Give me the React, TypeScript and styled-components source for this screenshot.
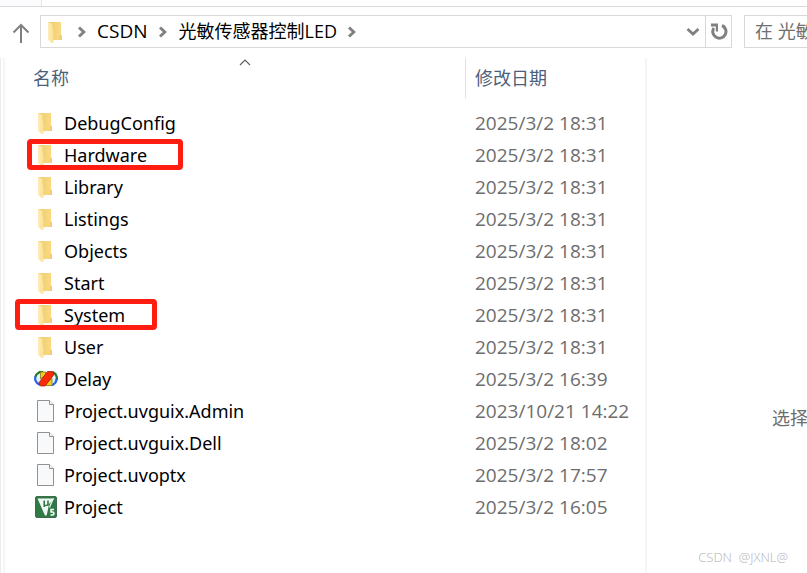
import React from "react";
import styled, { createGlobalStyle } from "styled-components";

const GlobalStyle = createGlobalStyle`
  *, *::before, *::after { box-sizing: border-box; }
  body {
    margin: 0;
    background: #fff;
    color: #000;
    font-family: "Open Sans", "Noto Sans CJK SC", sans-serif;
    font-size: 19px;
    line-height: 32px;
    overflow: hidden;
  }
  button, input { font: inherit; }
`;

const Window = styled.div`
  display: flex;
  flex-direction: column;
  min-height: 100vh;
`;

const RibbonEdge = styled.div`
  height: 7px;
  padding-left: 41px;
  background: #fcfcff;
  border-bottom: 1px solid #dadada;
`;

const RibbonPanel = styled.div`
  height: 6px;
  background: #fff;
  border-left: 1px solid #e4e4e8;
`;

const NavBar = styled.nav`
  display: flex;
  align-items: center;
  padding: 8px 0 10px;
`;

const IconButton = styled.button`
  display: flex;
  align-items: center;
  justify-content: center;
  flex: none;
  height: 31px;
  padding: 0;
  border: 0;
  background: none;
  color: #808080;
`;

const UpButton = styled(IconButton)`
  width: 40px;
  padding: 2px 0 0 2px;
`;

const DropButton = styled(IconButton)`
  width: 24px;
  margin-left: auto;
`;

const RefreshButton = styled(IconButton)`
  width: 26px;
  border-left: 1px solid #d9d9d9;
`;

const AddressBar = styled.div`
  display: flex;
  align-items: center;
  flex: 1;
  min-width: 0;
  height: 33px;
  padding-left: 3px;
  border: 1px solid #d9d9d9;
`;

const Crumb = styled.a`
  padding: 0 2px 2px;
  color: #000;
  font-size: 18px;
  line-height: 28px;
  white-space: nowrap;
  text-decoration: none;
`;

const LatinCrumb = styled(Crumb)`
  font-size: 19px;
`;

const Separator = styled.span`
  display: flex;
  justify-content: center;
  flex: none;
  width: 27px;
  color: #808080;
`;

const SearchArea = styled.div`
  display: flex;
  flex: none;
  width: 63px;
  margin-left: 12px;
  overflow: hidden;
`;

const SearchBox = styled.input`
  flex: none;
  width: 84px;
  height: 33px;
  padding: 0 0 2px 10px;
  border: 1px solid #d9d9d9;
  border-radius: 0;
  background: #fff;
  font-size: 18px;
  outline: 0;
  &::placeholder { color: #707070; opacity: 1; }
`;

const Body = styled.main`
  display: grid;
  grid-template-columns: 5px minmax(0, 1fr) 162px;
  flex: 1;
`;

const Splitter = styled.div`
  border-left: 1px solid #ececec;
  border-right: 2px solid #f5f5f5;
`;

const Table = styled.table`
  align-self: start;
  width: 100%;
  table-layout: fixed;
  border-collapse: separate;
  border-spacing: 0;
`;

const HeadCell = styled.th<{ $divided?: boolean }>`
  position: relative;
  width: ${(p) => (p.$divided ? "180px" : "auto")};
  height: 40px;
  padding: 0 0 0 ${(p) => (p.$divided ? "9px" : "28px")};
  border-left: ${(p) => (p.$divided ? "1px solid #e2e2e2" : "0")};
  color: #4c607a;
  font-size: 18px;
  font-weight: 400;
  line-height: 40px;
  text-align: left;
`;

const SortMark = styled.span`
  position: absolute;
  top: 0;
  left: 0;
  right: 0;
  display: flex;
  justify-content: center;
  padding-left: 19px;
  color: #606060;
`;

const Rows = styled.tbody`
  &::before {
    content: "";
    display: block;
    height: 9px;
  }
`;

const NameCell = styled.td`
  position: relative;
  height: 32px;
  padding: 0 0 0 29px;
`;

const FileLink = styled.a`
  display: flex;
  align-items: center;
  gap: 6px;
  color: #000;
  font-family: "Noto Sans", "Noto Sans CJK SC", sans-serif;
  font-size: 18px;
  text-decoration: none;
  white-space: nowrap;
`;

const DateCell = styled.td`
  padding: 0 0 0 10px;
  color: #6d6d6d;
  white-space: nowrap;
`;

const Highlight = styled.span<{ $left: number; $width: number }>`
  position: absolute;
  top: 0;
  left: ${(p) => p.$left}px;
  width: ${(p) => p.$width}px;
  height: 31px;
  border: 5px solid #fe1d10;
  border-radius: 4px;
  pointer-events: none;
`;

const Preview = styled.aside`
  padding: 344px 0 0 125px;
  border-left: 2px solid #f5f5f5;
  color: #6d6d6d;
  font-size: 18px;
  white-space: nowrap;
  overflow: hidden;
`;

const Watermark = styled.div`
  position: absolute;
  right: 19px;
  bottom: 6px;
  color: #b4b4b4;
  font-family: "Open Sans", sans-serif;
  font-size: 13px;
  font-weight: 300;
  line-height: 20px;
  white-space: pre;
`;

const FolderIcon = () => (
  <svg width="24" height="24" viewBox="0 0 24 24" aria-hidden="true">
    <defs>
      <linearGradient id="back" x1="0" x2="1">
        <stop offset="0" stopColor="#eccb6e" />
        <stop offset="1" stopColor="#fbdc83" />
      </linearGradient>
      <linearGradient id="flap" x1="0" x2="1">
        <stop offset="0" stopColor="#ffedb5" />
        <stop offset="1" stopColor="#fae097" />
      </linearGradient>
    </defs>
    <path d="M4 2H17V15L18 16V20H8Z" fill="url(#back)" />
    <path d="M17 14.5L18 15.5V20H15V16Z" fill="#f0cf78" />
    <path d="M4 2L8.500 4V10L9.500 11V22.500L8 23L4 20Z" fill="url(#flap)" />
  </svg>
);

const DocumentIcon = () => (
  <svg width="24" height="24" viewBox="0 0 24 24" aria-hidden="true">
    <path d="M3.500 1.500H15.500L19.500 5.500V22.500H3.500Z" fill="#f8f9fa" stroke="#919191" />
    <path d="M15.500 1.500V5.500H19.500" fill="#fff" stroke="#919191" />
  </svg>
);

const SourceIcon = () => (
  <svg width="24" height="24" viewBox="0 0 24 24" aria-hidden="true">
    <path d="M5 5H11L6 18L2 16L0 13V10L2 7Z" fill="#dff1ff" />
    <path d="M9 5.200H5.500L2.500 7.500L1.200 10" fill="none" stroke="#237a2a" strokeWidth="2.200" />
    <path d="M1.200 9.500V13L3 16L6 18" fill="none" stroke="#2467e8" strokeWidth="2.200" />
    <path d="M6.500 5H12V8L6.500 12Z" fill="#f3cb1c" stroke="#94780c" strokeWidth=".8" />
    <path d="M19 5L22 7L24 10V13L21 17L17 19H13Z" fill="#dff1ff" />
    <path d="M18.500 5L21.500 7L22.800 10V13" fill="none" stroke="#237a2a" strokeWidth="2.200" />
    <path d="M22.800 12L21.500 15.500L18 18.500" fill="none" stroke="#2467e8" strokeWidth="2.200" />
    <path d="M13 15L18 11.500V18.500H12Z" fill="#f3cb1c" stroke="#94780c" strokeWidth=".8" />
    <path d="M13.500 4.500H18.500L20 7.500L11 19H6.500L4.800 16Z" fill="#fb2b08" stroke="#a31e08" strokeWidth=".8" />
  </svg>
);

const ProjectIcon = () => (
  <svg width="24" height="24" viewBox="0 0 24 24" aria-hidden="true">
    <rect x="1.500" y="1.500" width="21" height="21" rx="1.500" fill="#2f7a45" stroke="#3f6c4c" />
    <path d="M3.500 3.500H20L12.500 20.500H11Z" fill="#f2f8f3" />
    <path d="M10.200 12V5.500V9.500Q10.200 10.500 12 10.500T14 9V5.500V10.800" fill="none" stroke="#2f7a45" strokeWidth="1.600" />
    <path d="M15 9L20 4V13L15.500 20L12.800 20.300Z" fill="#2f7a45" />
    <path d="M20 3.500L16 12.500H14.800L18.500 3.500Z" fill="#f2f8f3" />
    <path d="M20 14.600H17V17H18.500Q20 17 20 18.500T18.300 20H16.500" fill="none" stroke="#fff" strokeWidth="1.500" />
  </svg>
);

const icons = {
  folder: FolderIcon,
  document: DocumentIcon,
  source: SourceIcon,
  project: ProjectIcon,
};

const Chevron = () => (
  <svg width="10" height="14" viewBox="0 0 10 14" aria-hidden="true">
    <path d="M2 2.500L6.800 7L2 11.500" fill="none" stroke="currentColor" strokeWidth="2.900" />
  </svg>
);

type FileEntry = {
  name: string;
  date: string;
  kind: keyof typeof icons;
  mark?: { left: number; width: number };
};

const files: FileEntry[] = [
  { name: "DebugConfig", date: "2025/3/2 18:31", kind: "folder" },
  { name: "Hardware", date: "2025/3/2 18:31", kind: "folder", mark: { left: 22, width: 156 } },
  { name: "Library", date: "2025/3/2 18:31", kind: "folder" },
  { name: "Listings", date: "2025/3/2 18:31", kind: "folder" },
  { name: "Objects", date: "2025/3/2 18:31", kind: "folder" },
  { name: "Start", date: "2025/3/2 18:31", kind: "folder" },
  { name: "System", date: "2025/3/2 18:31", kind: "folder", mark: { left: 10, width: 142 } },
  { name: "User", date: "2025/3/2 18:31", kind: "folder" },
  { name: "Delay", date: "2025/3/2 16:39", kind: "source" },
  { name: "Project.uvguix.Admin", date: "2023/10/21 14:22", kind: "document" },
  { name: "Project.uvguix.Dell", date: "2025/3/2 18:02", kind: "document" },
  { name: "Project.uvoptx", date: "2025/3/2 17:57", kind: "document" },
  { name: "Project", date: "2025/3/2 16:05", kind: "project" },
];

const FileRow = ({ name, date, kind, mark }: FileEntry) => {
  const Icon = icons[kind];
  return (
    <tr>
      <NameCell>
        <FileLink href="#">
          <Icon />
          {name}
        </FileLink>
        {mark && <Highlight $left={mark.left} $width={mark.width} />}
      </NameCell>
      <DateCell>{date}</DateCell>
    </tr>
  );
};

export default function App() {
  return (
    <Window>
      <GlobalStyle />
      <RibbonEdge>
        <RibbonPanel />
      </RibbonEdge>
      <NavBar>
        <UpButton aria-label="Up">
          <svg width="18" height="20" viewBox="0 0 18 20" aria-hidden="true">
            <path d="M9 20V2M1.500 9.500L9 2L16.500 9.500" fill="none" stroke="currentColor" strokeWidth="2" />
          </svg>
        </UpButton>
        <AddressBar>
          <FolderIcon />
          <Separator><Chevron /></Separator>
          <LatinCrumb href="#">CSDN</LatinCrumb>
          <Separator><Chevron /></Separator>
          <Crumb href="#">光敏传感器控制LED</Crumb>
          <Separator><Chevron /></Separator>
          <DropButton aria-label="History">
            <svg width="14" height="10" viewBox="0 0 14 10" aria-hidden="true">
              <path d="M1.500 2L7 7L12.500 2" fill="none" stroke="currentColor" strokeWidth="2.800" />
            </svg>
          </DropButton>
          <RefreshButton aria-label="Refresh">
            <svg width="18" height="18" viewBox="0 0 18 18" aria-hidden="true">
              <path d="M12 2.500A6.600 6.600 0 1 1 3.800 5" fill="none" stroke="currentColor" strokeWidth="3" />
              <path d="M1 .5H8V8.500H5.800V3.500H1Z" fill="currentColor" />
            </svg>
          </RefreshButton>
        </AddressBar>
        <SearchArea>
          <SearchBox type="text" role="searchbox" aria-label="Search" placeholder="在 光敏" />
        </SearchArea>
      </NavBar>
      <Body>
        <Splitter />
        <Table>
          <thead>
            <tr>
              <HeadCell>
                名称
                <SortMark>
                  <svg width="12" height="9" viewBox="0 0 12 9" aria-hidden="true">
                    <path d="M1 7L6 2L11 7" fill="none" stroke="currentColor" strokeWidth="1.200" />
                  </svg>
                </SortMark>
              </HeadCell>
              <HeadCell $divided>修改日期</HeadCell>
            </tr>
          </thead>
          <Rows>
            {files.map((file) => (
              <FileRow key={file.name} {...file} />
            ))}
          </Rows>
        </Table>
        <Preview>选择</Preview>
      </Body>
      <Watermark>CSDN  @JXNL@</Watermark>
    </Window>
  );
}
